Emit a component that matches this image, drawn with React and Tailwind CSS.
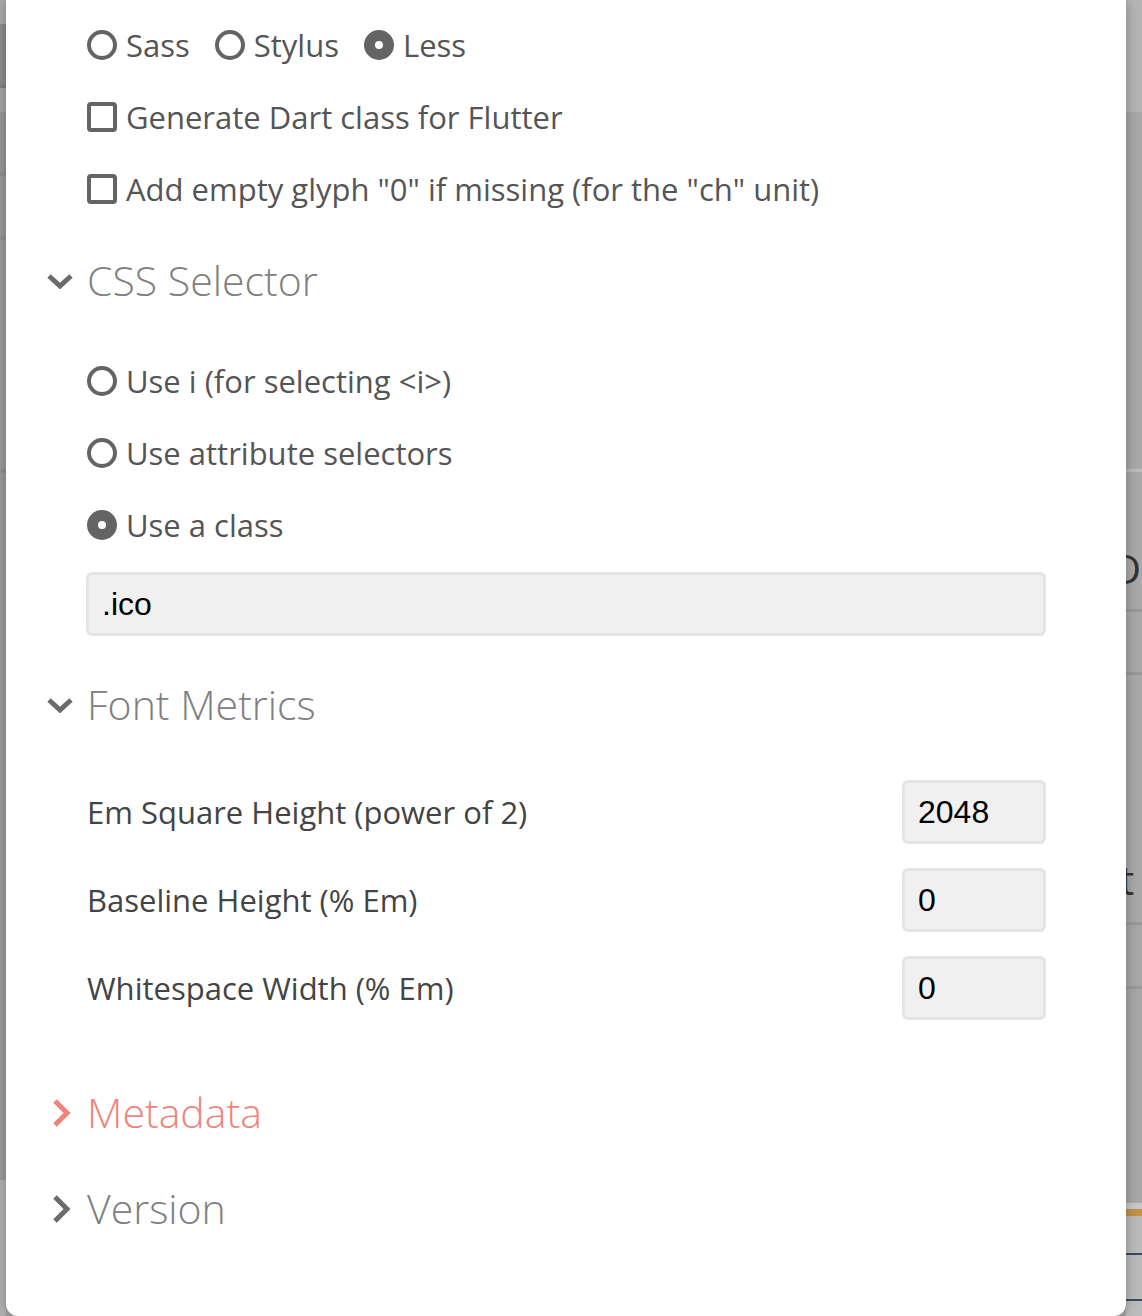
import React from "react";

const body = { fontFamily: '"Open Sans", "Noto Sans", sans-serif' };

function Radio({ checked }) {
  return checked ? (
    <span className="flex h-[30px] w-[30px] shrink-0 items-center justify-center rounded-full bg-[#646464]">
      <span className="h-[8px] w-[8px] rounded-full bg-white" />
    </span>
  ) : (
    <span className="h-[30px] w-[30px] shrink-0 rounded-full border-[4px] border-[#646464]" />
  );
}

function Checkbox() {
  return <span className="h-[30px] w-[30px] shrink-0 rounded-[4px] border-[4px] border-[#646464]" />;
}

function Option({ control, label }) {
  return (
    <label className="flex h-[72px] items-center gap-[9px] pl-[81px] text-[31px] text-[#555555]">
      {control}
      <span>{label}</span>
    </label>
  );
}

function Section({ title, open, color = "text-[#808080]", stroke = "#6b6b6b", className = "" }) {
  return (
    <div className={"flex h-[72px] items-center pl-[34px] " + className}>
      <span className="flex w-[47px] items-center">
        {open ? (
          <svg width="28" height="16" viewBox="0 0 28 16" className="ml-[6px]">
            <polyline points="3,3 14,13 25,3" fill="none" stroke={stroke} strokeWidth="5" />
          </svg>
        ) : (
          <svg width="20" height="30" viewBox="0 0 20 30" className="ml-[11px]">
            <polyline points="4,3 16,15 4,27" fill="none" stroke={stroke} strokeWidth="5" />
          </svg>
        )}
      </span>
      <span className={"text-[41px] font-light " + color}>{title}</span>
    </div>
  );
}

function MetricRow({ label, value }) {
  return (
    <div className="flex h-[64px] items-center justify-between pl-[81px] pr-[80px]">
      <span className="text-[31px] text-[#444444]">{label}</span>
      <div
        className="flex h-[64px] w-[144px] items-center rounded-[6px] border-[3px] border-[#e4e4e4] bg-[#f0f0f0] px-[13px] text-[32px] text-black"
        style={{ fontFamily: '"Liberation Sans", Arial, sans-serif' }}
      >
        {value}
      </div>
    </div>
  );
}

export default function App() {
  return (
    <div className="flex h-[1316px] w-full overflow-hidden bg-[#a2a2a2]" style={body}>
      {/* faded page behind the modal, left edge */}
      <div className="flex w-[6px] shrink-0 flex-col">
        <div className="h-[24px] bg-[#adadad]" />
        <div className="h-[61px] bg-[#8f8f8f]" />
        <div className="h-[3px] bg-[#848484]" />
        <div className="h-[24px] bg-[#a6a6a6]" />
        <div className="h-[60px] bg-[#9a9a9a]" />
        <div className="h-[4px] bg-[#929292]" />
        <div className="h-[60px] bg-[#9c9c9c]" />
        <div className="h-[4px] bg-[#939393]" />
        <div className="h-[229px] bg-[#9d9d9d]" />
        <div className="h-[4px] bg-[#939393]" />
        <div className="h-[707px] bg-[#9d9d9d]" />
        <div className="flex-1 bg-[#b4b4b4]" />
      </div>

      {/* modal */}
      <div className="relative z-10 flex w-[1120px] shrink-0 flex-col rounded-b-[12px] bg-white pt-[9px] pb-[71px] shadow-[0_0_14px_rgba(0,0,0,0.3)]">
        <div className="flex h-[72px] items-center gap-[25px] pl-[81px] text-[31px] text-[#555555]">
          <label className="flex items-center gap-[9px]">
            <Radio />
            <span>Sass</span>
          </label>
          <label className="flex items-center gap-[9px]">
            <Radio />
            <span>Stylus</span>
          </label>
          <label className="flex items-center gap-[9px]">
            <Radio checked />
            <span>Less</span>
          </label>
        </div>
        <Option control={<Checkbox />} label="Generate Dart class for Flutter" />
        <Option control={<Checkbox />} label={'Add empty glyph "0" if missing (for the "ch" unit)'} />

        <Section title="CSS Selector" open className="mt-[20px]" />

        <div className="mt-[28px]">
          <Option control={<Radio />} label="Use i (for selecting <i>)" />
          <Option control={<Radio />} label="Use attribute selectors" />
          <Option control={<Radio checked />} label="Use a class" />
        </div>

        <div className="mt-[11px] pl-[80px] pr-[80px]">
          <div
            className="flex h-[64px] items-center rounded-[6px] border-[3px] border-[#e4e4e4] bg-[#f0f0f0] px-[13px] text-[32px] text-black"
            style={{ fontFamily: '"Liberation Sans", Arial, sans-serif' }}
          >
            .ico
          </div>
        </div>

        <Section title="Font Metrics" open className="mt-[33px]" />

        <div className="mt-[39px] flex flex-col gap-[24px]">
          <MetricRow label="Em Square Height (power of 2)" value="2048" />
          <MetricRow label="Baseline Height (% Em)" value="0" />
          <MetricRow label="Whitespace Width (% Em)" value="0" />
        </div>

        <Section title="Metadata" color="text-[#f0847a]" stroke="#f0847a" className="mt-[57px]" />
        <Section title="Version" className="mt-[24px]" />
      </div>

      {/* faded page behind the modal, right edge */}
      <div className="flex w-[16px] shrink-0 flex-col overflow-hidden text-[#333333]">
        <div className="h-[112px] bg-[#b6b6b6]" />
        <div className="h-[357px] bg-[#a9a9a9]" />
        <div className="h-[3px] bg-[#bdbdbd]" />
        <div className="flex h-[137px] items-end bg-[#aaaaaa] pb-[20px] text-[40px] leading-none">
          <span className="-ml-[14px]">D</span>
        </div>
        <div className="h-[3px] bg-[#9a9a9a]" />
        <div className="h-[60px] bg-[#aaaaaa]" />
        <div className="h-[3px] bg-[#9a9a9a]" />
        <div className="flex h-[247px] items-end bg-[#aaaaaa] pb-[22px] text-[40px] leading-none">
          <span className="-ml-[6px]">t</span>
        </div>
        <div className="h-[3px] bg-[#9a9a9a]" />
        <div className="h-[61px] bg-[#aaaaaa]" />
        <div className="h-[3px] bg-[#9a9a9a]" />
        <div className="h-[214px] bg-[#a8a8a8]" />
        <div className="h-[6px] bg-[#c9c9c9]" />
        <div className="h-[7px] bg-[#c49347]" />
        <div className="h-[37px] bg-[#bcbcbc]" />
        <div className="h-[2px] bg-[#3b4b5e]" />
        <div className="h-[44px] bg-[#bcbcbc]" />
        <div className="h-[2px] bg-[#3b4b5e]" />
        <div className="flex-1 bg-[#bcbcbc]" />
      </div>
    </div>
  );
}
